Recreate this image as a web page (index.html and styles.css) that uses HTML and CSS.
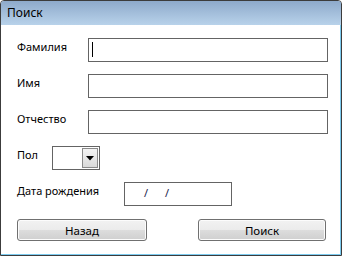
FILE: index.html
```html
<!DOCTYPE html>
<html lang="ru">
<head>
  <meta charset="UTF-8"/>
  <title>Поиск</title>
  <link rel="stylesheet" href="styles.css">
</head>
<body>
  <div class="window">
    <div class="titlebar">Поиск</div>

    <div class="content">
      <div class="row">
        <label class="label">Фамилия</label>
        <div class="field"><span class="caret"></span></div>
      </div>
      <div class="row">
        <label class="label">Имя</label>
        <div class="field"></div>
      </div>
      <div class="row">
        <label class="label">Отчество</label>
        <div class="field"></div>
      </div>
      <div class="row">
        <label class="label label-short">Пол</label>
        <div class="select">
          <div class="select-btn">
            <svg width="8" height="5" viewBox="0 0 8 5"><path d="M0 0h8L4 4.5z" fill="#000"/></svg>
          </div>
        </div>
      </div>
      <div class="row">
        <label class="label label-long">Дата рождения</label>
        <div class="date"><span class="sep">/</span><span class="sep">/</span></div>
      </div>

      <div class="buttons">
        <button class="btn btn-back">Назад</button>
        <button class="btn btn-search">Поиск</button>
      </div>
    </div>
  </div>
</body>
</html>
```

FILE: styles.css
```css
* {
  box-sizing: border-box;
}

body {
  margin: 0;
  background-color: #fff;
  font-family: "Noto Sans", "DejaVu Sans", sans-serif;
  font-size: 11px;
  color: #000;
}

.window {
  width: 342px;
  height: 256px;
  border: 1px solid #3c3c3c;
  border-radius: 4px 4px 0 0;
  box-shadow: inset -1px -1px 0 #7ccbef;
  background-color: #fff;
  overflow: hidden;
}

.titlebar {
  height: 24px;
  line-height: 24px;
  padding-left: 6px;
  font-size: 12px;
  background: linear-gradient(#8eaacb, #b8d2ea);
}

.content {
  padding: 13px 12px 0 16px;
}

.row {
  display: flex;
  align-items: center;
  height: 24px;
  margin-bottom: 12px;
}

.label {
  width: 71px;
  flex-shrink: 0;
  padding-bottom: 8px;
}

.label-short {
  width: 35px;
}

.label-long {
  width: 107px;
  padding-bottom: 7px;
}

.field {
  width: 240px;
  height: 24px;
  border: 1px solid #646464;
  padding: 3px 0 0 3px;
}

.caret {
  display: block;
  width: 1px;
  height: 15px;
  background-color: #000;
}

.select {
  width: 48px;
  height: 24px;
  border: 1px solid #646464;
  padding: 1px;
  display: flex;
  justify-content: flex-end;
}

.select-btn {
  width: 16px;
  height: 20px;
  border: 1px solid #8a8a8a;
  background: linear-gradient(#f4f4f4, #dadada);
  display: flex;
  align-items: center;
  justify-content: center;
}

.date {
  width: 108px;
  height: 24px;
  border: 1px solid #646464;
  padding: 2px 0 0 19px;
  color: #1a1a4a;
  display: flex;
  gap: 17px;
}

.buttons {
  display: flex;
  justify-content: space-between;
  margin-top: 13px;
  padding-right: 3px;
}

.btn {
  height: 22px;
  padding: 0;
  border: 1px solid #707070;
  border-radius: 3px;
  background: linear-gradient(#f2f2f2 0%, #ebebeb 50%, #dddddd 51%, #cfcfcf 100%);
  box-shadow: inset 0 0 0 1px #fcfcfc;
  font-family: "Noto Sans", "DejaVu Sans", sans-serif;
  font-size: 11.5px;
  color: #000;
}

.btn-back {
  width: 130px;
}

.btn-search {
  width: 128px;
}
```
